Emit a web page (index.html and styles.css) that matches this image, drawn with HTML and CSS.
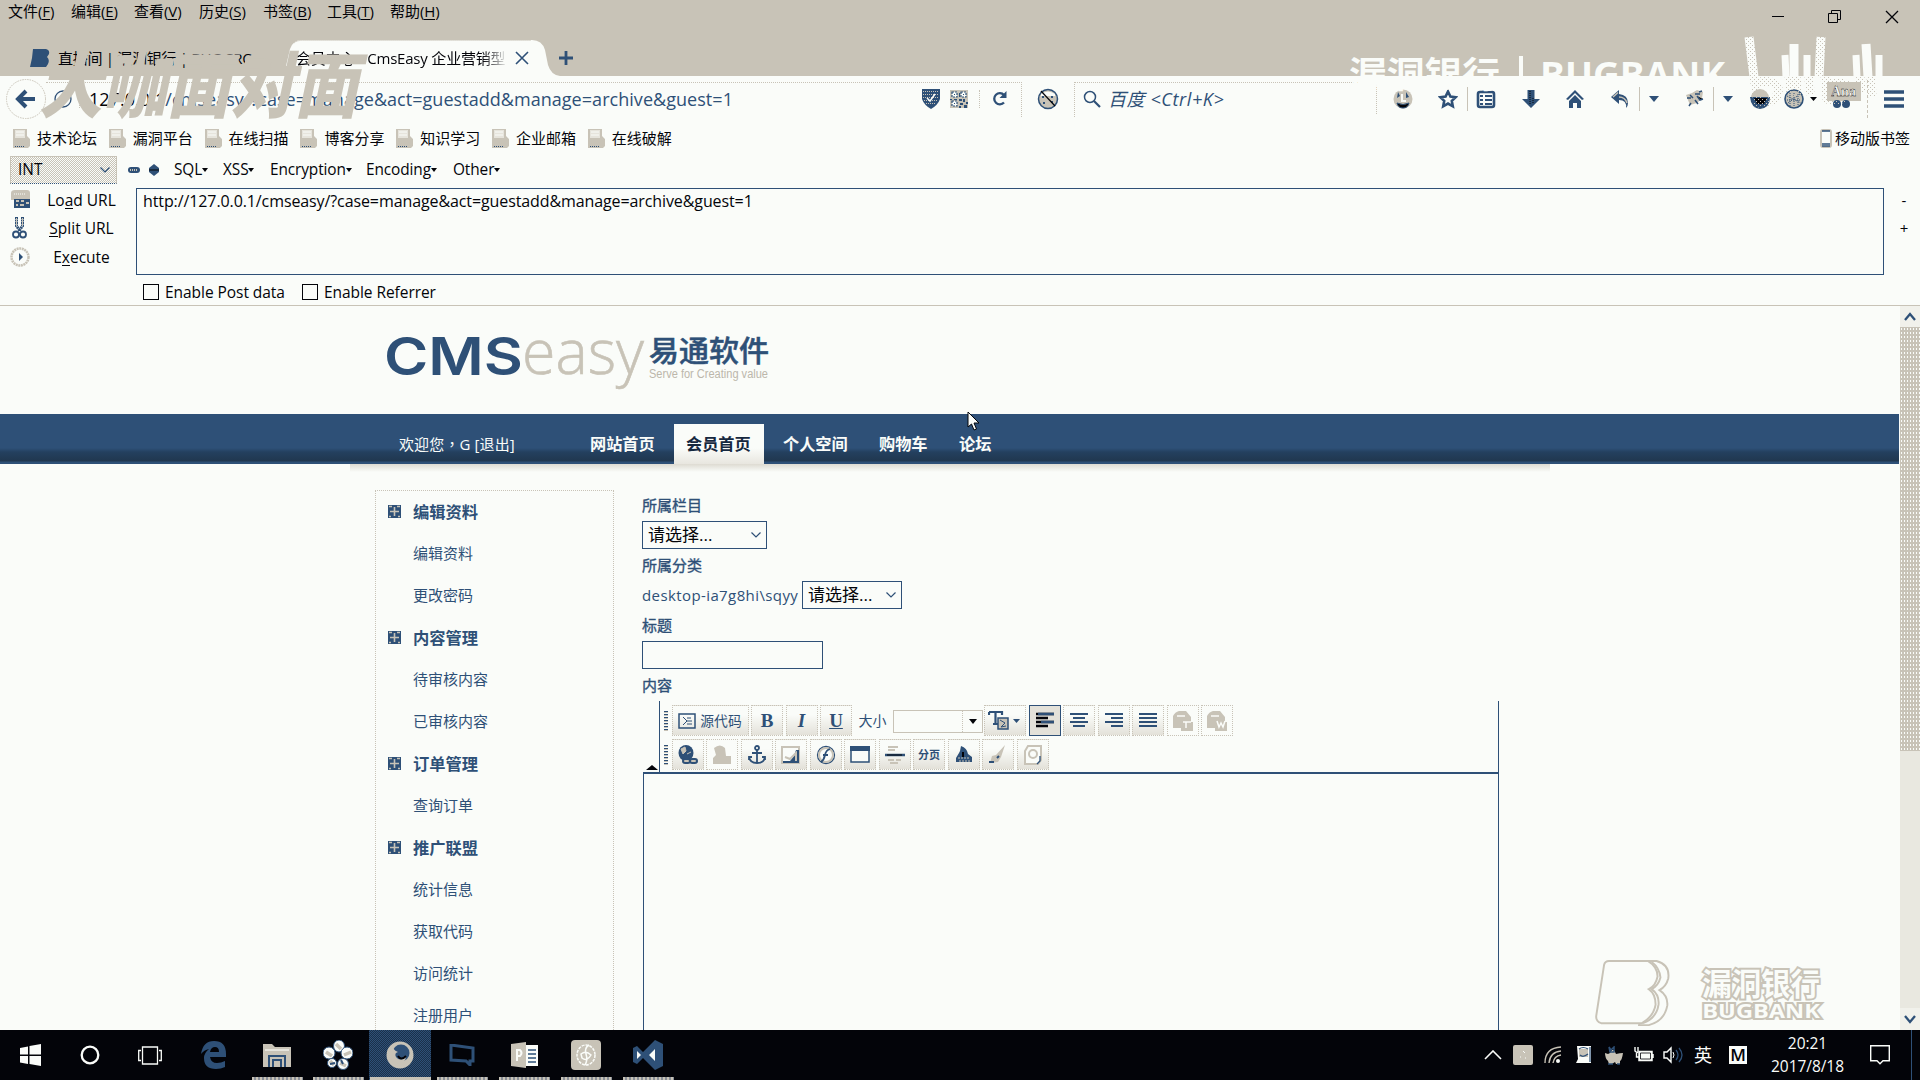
FILE: index.html
```html
<!DOCTYPE html>
<html lang="zh-CN">
<head>
<meta charset="utf-8">
<title>会员中心 - CmsEasy 企业营销型</title>
<link rel="stylesheet" href="styles.css">
</head>
<body>
<svg class="defs" width="0" height="0">
  <defs>
    <pattern id="dots" width="4" height="4" patternUnits="userSpaceOnUse"><path d="M0 0h1v1H0zM2 2h1v1H2z" fill="#c8c3b7"/></pattern>
    <symbol id="page" viewBox="0 0 18 20"><path d="M1 1h14v7l3 3v7l-2 2H1z" fill="#c8c3b7"/><path d="M3 2h10v8H3z" fill="#e6e4dc"/><path d="M4 4h8M4 7h8" stroke="#fafcf9"/><path d="M3 18.500h10" stroke="#2e5077" stroke-dasharray="1 1"/></symbol>
    <symbol id="plus" viewBox="0 0 13 13"><path d="M0 0h13v13H0z" fill="#2e5077"/><path d="M6.500 2v9M2 6.500h9M1 1.500h3M9 1.500h3M1 11.500h2M10 11.500h2" stroke="#c8c3b7" stroke-width="1.600"/></symbol>
    <symbol id="caret" viewBox="0 0 10 7"><path d="M0 0h10L5 6z" fill="#2e5077"/></symbol>
    <symbol id="chev" viewBox="0 0 10 6"><path d="M.5.500L5 5 9.500.500" fill="none" stroke="#2e5077" stroke-width="1.200"/></symbol>
  </defs>
</svg>

<header class="titlebar">
  <nav class="menu">
    <span>文件(<u>F</u>)</span><span>编辑(<u>E</u>)</span><span>查看(<u>V</u>)</span><span>历史(<u>S</u>)</span><span>书签(<u>B</u>)</span><span>工具(<u>T</u>)</span><span>帮助(<u>H</u>)</span>
  </nav>
  <div class="winbtns">
    <svg width="12" height="16"><path d="M0 6.500h12" stroke="#030409"/></svg>
    <svg width="13" height="13" fill="none" stroke="#030409"><path d="M.5 3.500h9v9h-9zM3.500 3.500v-3h9v9h-3"/></svg>
    <svg width="14" height="14" fill="none" stroke="#030409" stroke-width="1.300"><path d="M1 1l12 12M13 1L1 13"/></svg>
  </div>
  <div class="tabs">
    <div class="tab">
      <svg width="20" height="18"><path d="M3 0h13q4 1 3 5l-2 3q3 3 1 7l-2 3H0l2-9z" fill="#2e5077"/></svg>
      <span>直播间 | 漏洞银行 | BUG SRC</span>
    </div>
    <div class="tab active">
      <svg class="tabshape" width="286" height="36"><path d="M0 36q9-1 12-10l4-17q3-9 12-9h230q10 0 13 10l3 15q3 10 12 11z" fill="#fafcf9"/><path d="M20 3q4-3 9-2.500h228" fill="none" stroke="#c8c3b7" stroke-dasharray="1 1"/></svg>
      <span class="tabtitle">会员中心 - CmsEasy 企业营销型</span>
      <svg class="tabclose" width="14" height="14"><path d="M1 1l12 12M13 1L1 13" stroke="#2e5077" stroke-width="1.600"/></svg>
    </div>
    <svg class="newtab" width="16" height="16"><path d="M8 1v14M1 8h14" stroke="#2e5077" stroke-width="2.800"/></svg>
  </div>
</header>

<div class="toolbar">
  <svg class="back" width="40" height="40"><circle cx="20" cy="20" r="19.500" fill="none" stroke="#c8c3b7" stroke-dasharray="1.500 1"/><path d="M29 20H13M20 12l-8 8 8 8" fill="none" stroke="#2e5077" stroke-width="4"/></svg>
  <div class="urlbar">
    <svg width="18" height="18" class="info"><circle cx="9" cy="9" r="8" fill="none" stroke="#2e5077" stroke-width="1.300"/><path d="M9 7.500V13M9 4v2" stroke="#2e5077" stroke-width="2"/></svg>
    <span class="vsep"></span>
    <span class="url"><b>127.0.0.1</b>/cmseasy/?case=manage&amp;act=guestadd&amp;manage=archive&amp;guest=1</span>
    <div class="urlicons">
      <svg width="18" height="20"><path d="M0 0h18v10q-2 6-9 10Q2 16 0 10z" fill="#2e5077"/><path d="M1 2.500h16M1 5.500h16M1 8.500h16M2 11.500h14M4 14.500h10" stroke="#c8c3b7" stroke-dasharray="1 1"/><path d="M5 9l3 3 5-7" fill="none" stroke="#fafcf9" stroke-width="1.500"/></svg>
      <svg width="18" height="18"><path d="M0 0h18v18H0z" fill="#c8c3b7"/><path d="M2 2h5v5H2zM11 2h5v5h-5zM2 11h5v5H2z" fill="#fafcf9" stroke="#2e5077" stroke-width="1.200" stroke-dasharray="2 1"/><path d="M4 4h1v1H4zM13 4h1v1h-1zM4 13h1v1H4zM9 3h1v4H9zM9 9h3v2H9zM13 9h2v3h-2zM16 12h2v2h-2zM10 13h3v2h-3zM14 15h3v3h-3zM9 16h2v2H9zM0 9h2v1H0zM4 9h3v1H4z" fill="#2e5077"/></svg>
      <span class="vsep"></span>
      <svg width="16" height="16"><path d="M12 11.500A5.600 5.600 0 1 1 12 4" fill="none" stroke="#2e5077" stroke-width="2.300"/><path d="M14.500 0v7h-7z" fill="#2e5077"/></svg>
    </div>
  </div>
  <svg class="noscript" width="22" height="22"><circle cx="11" cy="11" r="9.500" fill="#c8c3b7" stroke="#2e5077" stroke-width="1.500"/><path d="M4 6q7-5 14 0v2H4z" fill="#fafcf9"/><path d="M5 9h2M14 9h2M6 15h2M14 14h2" stroke="#2e5077" stroke-width="2"/><path d="M4 3l14 15" stroke="#030409" stroke-width="1.200"/></svg>
  <div class="search">
    <svg width="18" height="18" fill="none" stroke="#2e5077"><circle cx="7" cy="7" r="5.500" stroke-width="1.500"/><path d="M11 11l6 6" stroke-width="2.200"/></svg>
    <span>百度 &lt;Ctrl+K&gt;</span>
  </div>
  <div class="tools">
    <svg width="20" height="20"><circle cx="10" cy="10" r="9.500" fill="#c8c3b7"/><path d="M5 3l2 4-3 2zM13 3l3 5-3 1z" fill="#2e5077"/><path d="M4 14q6 3 12 0-1 5-6 5t-6-5z" fill="#030409" stroke="#2e5077"/><path d="M9 5v7h4" fill="none" stroke="#fafcf9" stroke-width="2"/></svg>
    <svg width="20" height="20"><path d="M10 2.500l2.400 5 5.300.700-3.900 3.700 1 5.400-4.800-2.700-4.800 2.700 1-5.400-3.900-3.700 5.300-.700z" fill="none" stroke="#2e5077" stroke-width="2.600"/></svg>
    <i class="sep"></i>
    <svg width="20" height="20"><path d="M4 3q6-5 12 0" fill="#c8c3b7"/><rect x="2" y="3" width="16" height="15" rx="2" fill="#fafcf9" stroke="#2e5077" stroke-width="2.600"/><path d="M4 7h3M9 7h7M4 11h3M9 11h7M4 15h3M9 15h7" stroke="#2e5077" stroke-width="2"/></svg>
    <svg width="20" height="20"><path d="M6.500 1h7v9H19l-9 9-9-9h5.500z" fill="#2e5077"/><path d="M9 2v14M12 9v5" stroke="#030409" stroke-dasharray="1 1"/></svg>
    <svg width="20" height="20"><path d="M10 1l9 9-2 1-7-7-7 7-2-1zM10 6l6 6v7h-4v-5H8v5H4v-7z" fill="#2e5077"/></svg>
    <svg width="20" height="20"><path d="M1 8l8-7v4q9 1 9 9 0 3-2 5 1-8-7-8v4z" fill="#2e5077"/><path d="M3 8l5-4.500M9 8q6 0 8 6" fill="none" stroke="#c8c3b7" stroke-width="1.500"/></svg>
    <i class="sep"></i>
    <svg width="10" height="7"><use href="#caret"/></svg>
    <svg width="20" height="20"><path d="M1 6l6-2 5-3 6 2-1 6-5 5-7 2z" fill="#c8c3b7"/><path d="M5 6l3 3M10 5l5 0M2 9h4M12 7l3 4 3-1M6 14l-2 3M10 11l3 4M14 3l3-1" stroke="#2e5077" stroke-width="1.500"/></svg>
    <i class="sep"></i>
    <svg width="10" height="7"><use href="#caret"/></svg>
    <svg width="20" height="20"><circle cx="10" cy="9" r="9" fill="#c8c3b7"/><path d="M0 8h20q0 11-10 12Q1 19 0 8z" fill="#2e5077"/><path d="M4 9h13l-3 6H7z" fill="#030409"/></svg>
    <svg width="20" height="20"><circle cx="10" cy="10" r="9" fill="#c8c3b7" stroke="#2e5077" stroke-width="1.600"/><path d="M3 7l14 7M4 14L16 5M10 4v14M6 4v13M14 5v12M3 11h14" stroke="#2e5077" stroke-dasharray="1 1"/></svg>
    <svg width="7" height="5"><path d="M0 0h7L3.500 4z" fill="#030409"/></svg>
    <svg width="36" height="34" viewBox="0 0 36 34"><path d="M1 0h34v19H1z" fill="#c8c3b7"/><text x="5" y="14" class="ana">Ana</text><circle cx="11" cy="22" r="4" fill="#2e5077"/><circle cx="20" cy="22" r="4" fill="#2e5077"/></svg>
    <i class="sep dash"></i>
    <svg width="20" height="18"><path d="M0 2h20M0 9h20M0 16h20" stroke="#2e5077" stroke-width="3.400"/></svg>
  </div>
</div>

<div class="bookmarks">
  <span><svg width="18" height="20"><use href="#page"/></svg>技术论坛</span>
  <span><svg width="18" height="20"><use href="#page"/></svg>漏洞平台</span>
  <span><svg width="18" height="20"><use href="#page"/></svg>在线扫描</span>
  <span><svg width="18" height="20"><use href="#page"/></svg>博客分享</span>
  <span><svg width="18" height="20"><use href="#page"/></svg>知识学习</span>
  <span><svg width="18" height="20"><use href="#page"/></svg>企业邮箱</span>
  <span><svg width="18" height="20"><use href="#page"/></svg>在线破解</span>
  <span class="mobile"><svg width="12" height="19"><rect x="1" y="1" width="10" height="17" rx="2" fill="#fafcf9" stroke="#c8c3b7" stroke-width="2"/><path d="M2 2h8M2 15h8M2 17h8" stroke="#2e5077" stroke-width="1.500"/></svg>移动版书签</span>
</div>

<section class="hackbar">
  <div class="hb-menu">
    <div class="hb-select">INT<svg width="10" height="6"><use href="#chev"/></svg></div>
    <svg width="12" height="7"><rect width="12" height="6" rx="3" fill="#2e5077"/><path d="M2 3h8" stroke="#c8c3b7" stroke-width="2" stroke-dasharray="1 1"/></svg>
    <svg width="12" height="12"><path d="M6 0l5 4v4l-5 4-5-4V4z" fill="#2e5077"/><path d="M1 6h10" stroke="#030409"/></svg>
    <span>SQL</span><span>XSS</span><span>Encryption</span><span>Encoding</span><span>Other</span>
  </div>
  <div class="hb-main">
    <div class="hb-actions">
      <div><svg width="20" height="20"><path d="M1 3q0-3 4-3h12q3 0 3 3v7H1z" fill="#c8c3b7"/><path d="M4 4h12" stroke="#fafcf9" stroke-dasharray="1 1"/><path d="M4 9h16v9H4z" fill="#2e5077"/><path d="M6 11h3M11 11h3M6 15h2M10 15h4M16 13h3" stroke="#c8c3b7" stroke-width="2"/></svg><span>Lo<u>a</u>d URL</span></div>
      <div><svg width="20" height="22"><path d="M6.500 0v9l3 4M12.500 0v9l-3 4" fill="none" stroke="#2e5077" stroke-width="3" stroke-dasharray="2 .500"/><path d="M6.500 1v8M12.500 1v8" stroke="#c8c3b7"/><circle cx="6" cy="17.500" r="3" fill="none" stroke="#2e5077" stroke-width="1.800"/><circle cx="13" cy="17.500" r="3" fill="none" stroke="#2e5077" stroke-width="1.800"/></svg><span><u>S</u>plit URL</span></div>
      <div><svg width="20" height="20"><circle cx="10" cy="10" r="8.500" fill="#fafcf9" stroke="#c8c3b7" stroke-width="2.500" stroke-dasharray="2 .600"/><path d="M9 6l4 4-4 4z" fill="#2e5077"/></svg><span>E<u>x</u>ecute</span></div>
    </div>
    <div class="hb-text">http://127.0.0.1/cmseasy/?case=manage&amp;act=guestadd&amp;manage=archive&amp;guest=1</div>
    <div class="hb-side"><span>-</span><span>+</span></div>
  </div>
  <div class="hb-checks"><label><i></i>Enable Post data</label><label><i></i>Enable Referrer</label></div>
</section>

<div class="viewport">
  <main class="page">
    <div class="brand">
      <svg width="400" height="72" viewBox="0 0 400 72">
        <text class="cms" x="1" y="45" textLength="139" lengthAdjust="spacingAndGlyphs">CMS</text>
        <text class="easy" x="139" y="44" textLength="122" lengthAdjust="spacingAndGlyphs">easy</text>
        <text class="cn" x="266" y="32" textLength="120" lengthAdjust="spacingAndGlyphs">易通软件</text>
        <text class="slogan" x="266" y="48" textLength="119" lengthAdjust="spacingAndGlyphs">Serve for Creating value</text>
      </svg>
    </div>
    <div class="nav">
      <span class="welcome">欢迎您<span class="comma" lang="zh-TW">，</span>G [退出]</span>
      <a>网站首页</a><a class="on">会员首页</a><a>个人空间</a><a>购物车</a><a>论坛</a>
    </div>
    <div class="shadow"></div>
    <div class="cols">
      <aside class="side">
        <h3><svg width="13" height="13"><use href="#plus"/></svg>编辑资料</h3><p>编辑资料</p><p>更改密码</p>
        <h3><svg width="13" height="13"><use href="#plus"/></svg>内容管理</h3><p>待审核内容</p><p>已审核内容</p>
        <h3><svg width="13" height="13"><use href="#plus"/></svg>订单管理</h3><p>查询订单</p>
        <h3><svg width="13" height="13"><use href="#plus"/></svg>推广联盟</h3><p>统计信息</p><p>获取代码</p><p>访问统计</p><p>注册用户</p>
      </aside>
      <form class="form">
        <div class="row strong">所属栏目</div>
        <div class="row"><div class="select wide">请选择...<svg width="10" height="6"><use href="#chev"/></svg></div></div>
        <div class="row strong">所属分类</div>
        <div class="row"><span class="host">desktop-ia7g8hi\sqyy</span><div class="select">请选择...<svg width="10" height="6"><use href="#chev"/></svg></div></div>
        <div class="row strong">标题</div>
        <div class="row"><div class="input"></div></div>
        <div class="row strong">内容</div>
        <div class="editor">
          <div class="ed-top">
            <div class="collapse"><svg width="12" height="5"><path d="M0 5l6-5 6 5z" fill="#030409"/></svg></div>
            <div class="ed-bars">
              <div class="bar">
                <i class="grip"></i>
                <div class="btn src"><svg width="18" height="16"><path d="M1 1h16v14H1z" fill="none" stroke="#2e5077" stroke-width="1.500"/><path d="M5 4l4 4-4 4M9 8h5M9 5h4M9 11h5" fill="none" stroke="#2e5077"/></svg>源代码</div>
                <div class="btn serif">B</div><div class="btn serif it">I</div><div class="btn serif un">U</div>
                <span class="size">大小</span>
                <div class="combo"><i></i><svg width="8" height="5"><path d="M0 0h8L4 5z" fill="#030409"/></svg></div>
                <div class="btn tc"><svg width="34" height="22"><path d="M1 2h13v3M1 2v3M7.500 2v12M5 14h5" fill="none" stroke="#2e5077" stroke-width="2.200"/><path d="M10 8h10v11H10z" fill="#c8c3b7" stroke="#2e5077" stroke-width="1.500"/><path d="M12 10l5 3-4 4 5-1" fill="none" stroke="#2e5077"/><path d="M25 9h7l-3.500 4z" fill="#2e5077"/></svg></div>
                <div class="btn sel"><svg width="18" height="18"><path d="M0 2h18M0 6h12M0 10h18M0 14h12" stroke="#030409" stroke-width="2.500"/><path d="M2 2h16M5 10h13" stroke="#2e5077" stroke-width="2.500"/></svg></div>
                <div class="btn"><svg width="18" height="18"><path d="M0 2h18M3 6h12M0 10h18M3 14h12" stroke="#2e5077" stroke-width="2"/></svg></div>
                <div class="btn"><svg width="18" height="18"><path d="M0 2h18M6 6h12M0 10h18M6 14h12" stroke="#2e5077" stroke-width="2"/></svg></div>
                <div class="btn"><svg width="18" height="18"><path d="M0 2h18M0 6h18M0 10h18M0 14h18" stroke="#2e5077" stroke-width="2"/></svg></div>
                <div class="btn flat"><svg width="20" height="20"><path d="M0 5q2-4 6-5h7l5 6v5h2v9H8v-3H0z" fill="#c8c3b7"/><path d="M4 5h8M10 11h8M13 11v6" stroke="#fafcf9" stroke-width="1.500"/></svg></div>
                <div class="btn flat"><svg width="20" height="20"><path d="M0 5q2-4 6-5h7l5 6v5h2v9H8v-3H0z" fill="#c8c3b7"/><path d="M4 5h8M10 10l2 6 2-4 2 4 2-6" fill="none" stroke="#fafcf9" stroke-width="1.500"/></svg></div>
              </div>
              <div class="bar">
                <i class="grip"></i>
                <div class="btn"><svg width="20" height="20"><ellipse cx="8" cy="8" rx="7.500" ry="8" fill="#2e5077"/><path d="M3 4l4-2 1 4-3 3zM9 9l4-2" fill="#c8c3b7" stroke="#c8c3b7"/><rect x="5" y="14" width="7" height="4" rx="2" fill="#c8c3b7" stroke="#2e5077" stroke-width="2"/><rect x="12" y="14" width="7" height="4" rx="2" fill="#c8c3b7" stroke="#2e5077" stroke-width="2"/></svg></div>
                <div class="btn flat"><svg width="20" height="20"><path d="M2 3q6-5 11 0l1 8h5v8H1v-6l3-3z" fill="#c8c3b7"/></svg></div>
                <div class="btn"><svg width="18" height="20" fill="none" stroke="#2e5077" stroke-width="1.800"><circle cx="9" cy="3" r="2"/><path d="M9 5v14M4 8h10M1 12q1 6 8 6t8-6M1 15v-3h3M17 15v-3h-3"/></svg></div>
                <div class="btn"><svg width="20" height="18"><path d="M1 1h17v16H1z" fill="#fafcf9" stroke="#c8c3b7" stroke-width="2"/><path d="M2 15h7l4-5 2-6h3v13H2z" fill="#2e5077"/><path d="M4 11l5 2 6-6v8" stroke="#c8c3b7" stroke-width="2" fill="none"/></svg></div>
                <div class="btn"><svg width="20" height="20"><circle cx="10" cy="10" r="8.500" fill="#fafcf9" stroke="#2e5077" stroke-width="1.300"/><circle cx="10" cy="10" r="7" fill="none" stroke="#c8c3b7" stroke-width="2"/><path d="M14 4q-4 1-5 6t-4 7M7 10h5" stroke="#2e5077" stroke-width="1.800" fill="none"/></svg></div>
                <div class="btn"><svg width="20" height="17"><path d="M1 1h18v15H1z" fill="#fafcf9" stroke="#2e5077" stroke-width="1.500"/><path d="M0 0h20v5H0z" fill="#2e5077"/></svg></div>
                <div class="btn"><svg width="20" height="18"><path d="M3 1h10M3 4h7M3 14h6M11 14h5M5 17h8" stroke="#c8c3b7" stroke-width="2"/><path d="M0 9h20" stroke="#2e5077" stroke-width="2.500"/><path d="M2 9h15" stroke="#030409"/></svg></div>
                <div class="btn pb">分页</div>
                <div class="btn"><svg width="20" height="18"><path d="M7 0q6 2 7 8l4 3v5H2v-4l3-5 1-2z" fill="#2e5077"/><path d="M4 12h12M5 15h12" stroke="#c8c3b7" stroke-dasharray="2 1"/><path d="M9 6v5" stroke="#030409" stroke-width="2"/></svg></div>
                <div class="btn"><svg width="20" height="20"><path d="M17 0l-9 10-4 1-2 7 8-1 3-5z" fill="#c8c3b7"/><path d="M1 17h5M9 13l2-2" stroke="#2e5077" stroke-width="2"/></svg></div>
                <div class="btn"><svg width="20" height="20"><path d="M5 1h13v14l-3 4H2V6z" fill="#fafcf9" stroke="#c8c3b7" stroke-width="2"/><circle cx="10" cy="9" r="4" fill="none" stroke="#c8c3b7" stroke-width="2"/><path d="M17 11v5l-3 3" fill="none" stroke="#2e5077" stroke-width="1.300"/></svg></div>
              </div>
            </div>
          </div>
          <div class="ed-body"></div>
        </div>
      </form>
    </div>
  </main>
  <div class="scroll">
    <div class="sb"><svg width="12" height="9"><path d="M1 8l5-6 5 6" fill="none" stroke="#2e5077" stroke-width="2.300"/></svg></div>
    <div class="thumb"></div><div class="track"></div>
    <div class="sb"><svg width="12" height="9"><path d="M1 1l5 6 5-6" fill="none" stroke="#2e5077" stroke-width="2.300"/></svg></div>
  </div>
</div>

<footer class="taskbar">
  <div class="apps">
    <div><svg width="21" height="22"><path d="M0 4l8-1.500v8H0zM9.500 2L21 0v10.500H9.500zM0 12h8v8l-8-1.500zM9.500 12H21v10L9.500 20z" fill="#fafcf9"/></svg></div>
    <div><svg width="20" height="20"><circle cx="10" cy="10" r="8.300" fill="none" stroke="#fafcf9" stroke-width="2.300"/></svg></div>
    <div><svg width="24" height="19" fill="none" stroke="#fafcf9" stroke-width="1.300"><path d="M4.500 1h15v17h-15zM3 4.500H.7v10H3M21 4.500h2.300v10H21"/></svg></div>
    <div><svg width="26" height="28"><path d="M0 13Q2 0 13 0q12 0 12 13v3H9q1 6 7 6 4 0 8-2v6q-4 2-9 2Q3 28 3 17 3 12 8 8 3 9 0 13zM9 11h9q0-5-4-5t-5 5z" fill="#2e5077" fill-rule="evenodd"/></svg></div>
    <div class="run"><svg width="28" height="25"><path d="M0 1h9l3 3h16v20H0z" fill="#c8c3b7"/><path d="M2 6h24v2H2z" fill="#e6e4dc"/><path d="M6 24V13h16v11M10 24v-7h8v7" fill="none" stroke="#2e5077" stroke-width="2"/></svg></div>
    <div class="run"><svg width="30" height="30"><g fill="#fafcf9" stroke="#2e5077"><ellipse cx="16" cy="6" rx="5.500" ry="6"/><ellipse cx="6" cy="13" rx="6" ry="6"/><ellipse cx="24" cy="13" rx="6" ry="6"/><circle cx="9" cy="23" r="4.500"/><circle cx="20" cy="24" r="5.500"/></g><path d="M13 4l5 5M3 12l6 4M21 15l7-3M17 23l6 3M7 21l4 4" stroke="#c8c3b7" stroke-width="3.500"/><path d="M7 24l5-1M18 20l2 4" stroke="#2e5077" stroke-width="2"/></svg></div>
    <div class="run cur"><svg width="28" height="28"><circle cx="14" cy="14" r="13.500" fill="#c8c3b7"/><circle cx="15" cy="12" r="8.500" fill="#2e5077"/><path d="M7 3q-1 6 5 8-4 1-2 5 4 5 10 0-1 7-9 6Q1 19 3 7z" fill="#c8c3b7"/><path d="M12 15q3 5 8 0" fill="none" stroke="#030409" stroke-width="2"/></svg></div>
    <div class="run"><svg width="26" height="22"><path d="M2 1l22 3v13h-3v4l-4-4L2 16z" fill="none" stroke="#2e5077" stroke-width="3"/></svg></div>
    <div class="run"><svg width="27" height="26"><path d="M14 3h13v21H14z" fill="#fafcf9"/><path d="M17 8h8M17 12h8M17 16h8M17 20h8" stroke="#2e5077" stroke-width="1.500"/><path d="M0 2L15 0v26L0 24z" fill="#c8c3b7"/><path d="M6 19V8h3q3 3 0 6H6" fill="none" stroke="#fafcf9" stroke-width="2"/></svg></div>
    <div class="run"><svg width="30" height="30"><rect width="30" height="30" rx="4" fill="#c8c3b7"/><ellipse cx="15" cy="15" rx="9" ry="10" fill="none" stroke="#fafcf9" stroke-width="1.500" stroke-dasharray="3 1"/><path d="M18 5q-5 3-3 9t-1 11M10 14q5-4 10 1-4 7-9 3z" fill="none" stroke="#fafcf9" stroke-width="1.500"/></svg></div>
    <div class="run"><svg width="30" height="30"><path d="M22 0l8 4v22l-8 4L10 18l-6 6-4-2V8l4-2 6 6z" fill="#2e5077"/><path d="M4 11v8l4-4zM22 9v12l-6-6z" fill="#fafcf9"/></svg></div>
  </div>
  <div class="tray">
    <svg width="18" height="10"><path d="M1 9l8-8 8 8" fill="none" stroke="#fafcf9" stroke-width="1.600"/></svg>
    <svg width="20" height="20"><rect width="20" height="20" rx="2" fill="#c8c3b7"/><path d="M10 6l2 2M7 12h1M12 13h1" stroke="#fafcf9"/></svg>
    <svg width="18" height="18" fill="none" stroke="#c8c3b7" stroke-width="1.400"><path d="M1 17Q1 2 17 1M5 17Q6 6 17 5M9 17q1-7 8-8"/><circle cx="14" cy="15" r="2" fill="#fafcf9" stroke="none"/></svg>
    <svg width="15" height="18"><path d="M1 0h14v17H0l2-4z" fill="#fafcf9"/><path d="M3 3h9v8H3z" fill="#c8c3b7"/><path d="M3 3q4-3 9 0M4 9q3 3 8-1M14 1v15" fill="none" stroke="#2e5077" stroke-width="1.200"/></svg>
    <svg width="18" height="19"><path d="M5 7l2-3h2l2 4q4-1 7-1-1 7-3 8v3h-4l-1-2-3 2H4l-1-3q-3-3-3-8l3 1z" fill="#c8c3b7"/><path d="M4 1l2 3 3-3v5H5zM3 18h5M12 18h3" fill="none" stroke="#2e5077" stroke-width="1.500"/></svg>
    <svg width="20" height="16"><path d="M5 4.500h13v9H5zM19 7v4" fill="#fafcf9" stroke="#fafcf9" stroke-width="1.500"/><path d="M6.500 6h10v6h-10z" fill="#fafcf9" stroke="#030409" stroke-width=".800"/><path d="M1 0v4q3 3 3 0V0M2.500 6v4H5" fill="none" stroke="#fafcf9" stroke-width="1.400"/></svg>
    <svg width="20" height="18" fill="none"><path d="M1 6h3l4-4v14l-4-4H1z" stroke="#fafcf9" stroke-width="1.400"/><path d="M10 6q2 3 0 6" stroke="#fafcf9"/><path d="M13 4q4 5 0 10M16 2q6 7 0 14" stroke="#2e5077" stroke-width="1.300"/></svg>
    <span class="ime">英</span>
    <span class="m">M</span>
    <div class="clock"><span>20:21</span><span>2017/8/18</span></div>
    <svg width="20" height="20"><path d="M.7.700h18.600v15H13l-3 3-3-3H.7z" fill="none" stroke="#fafcf9" stroke-width="1.400"/></svg>
    <i class="peek"></i>
  </div>
</footer>

<div class="show-mark">大咖面对面</div>
<svg class="corner-mark" width="560" height="90" viewBox="0 0 560 90">
  <text class="bank" x="-1" y="53" textLength="151" lengthAdjust="spacingAndGlyphs">漏洞银行</text>
  <path d="M171 21v28" stroke="#fafcf9" stroke-width="4"/>
  <text class="bank" x="190" y="53" textLength="185" lengthAdjust="spacingAndGlyphs">BUGBANK</text>
  <g stroke-width="9" fill="none"><path d="M399 2l5 40M471 2l-2 40M444 9v33M516 9l2 33" stroke="#fafcf9"/><path d="M435 20l1 22M457 20v22M506 20l1 22M529 20v22" stroke="#fafcf9" stroke-width="7"/><path d="M399 2l5 40M471 2l-2 40M404 42l4 26q22 0 20-15-2-8-20-6M439 42l2 18M446 42l2 20M459 42l1 18M475 42l2 22q22 4 22-10-2-8-20-6M510 42l1 16M521 42l1 20" stroke="url(#dots)"/></g>
</svg>
<svg class="logo-mark" width="240" height="72" viewBox="0 0 240 72">
  <g fill="#fafcf9" stroke="#c8c3b7" stroke-width="2"><path d="M55 2h8q14 4 12 18-2 8-9 12 9 6 8 16-3 16-19 20H45z"/><path d="M14 2h40q10 6 10 16-2 10-9 13 7 5 7 16-2 12-14 19H6q-6-2-5-8L9 6q1-4 5-4z"/><path d="M58 3q8 6 9 16-2 8-9 12 8 6 7 16-2 14-16 19" fill="none"/></g>
  <text class="lm" x="110" y="37" textLength="121" lengthAdjust="spacingAndGlyphs" font-size="31">漏洞银行</text>
  <text class="lm" x="110" y="61" textLength="121" lengthAdjust="spacingAndGlyphs" font-size="21">BUGBANK</text>
</svg>
<svg class="cursor" width="13" height="20"><path d="M1 1v15l3.500-3 2.500 6 2.500-1-2.500-6H12z" fill="#fafcf9" stroke="#030409"/></svg>
</body>
</html>
```
FILE: styles.css
```css
:root { --bg: #fafcf9; --tan: #c8c3b7; --blue: #2e5077; --ink: #030409; }
* { box-sizing: border-box; }
body { margin: 0; width: 1920px; height: 1080px; overflow: hidden; position: relative; display: flex; flex-direction: column; background: var(--bg); color: var(--ink); font: 15px/20px "Open Sans", "Noto Sans CJK SC", sans-serif; }
svg { display: block; flex: none; }
.defs { position: absolute; }
u { text-decoration: none; border-bottom: 1px solid currentColor; display: inline-block; line-height: 15px; }

.titlebar { height: 76px; background: var(--tan); display: grid; grid-template: 40px 36px / 1fr 160px; flex: none; }
.menu { display: grid; grid-template-columns: 63px 63px 65px 64px 64px 63px 63px; padding-left: 8px; padding-top: 1px; white-space: nowrap; letter-spacing: -.05px; }
.winbtns { display: flex; align-items: flex-start; gap: 44px; padding: 10px 0 0 12px; }
.tabs { grid-column: 1 / -1; display: flex; align-items: flex-start; }
.tab { display: flex; gap: 8px; padding: 9px 0 0 30px; width: 274px; height: 36px; white-space: nowrap; }
.tab span { line-height: 18px; letter-spacing: -.3px; }
.tab.active { width: 286px; padding: 0; position: relative; }
.tabshape { position: absolute; left: 0; top: 0; }
.tabtitle { position: relative; width: 212px; margin: 9px 0 0 22px; -webkit-mask: linear-gradient(90deg, #000 88%, transparent); mask: linear-gradient(90deg, #000 88%, transparent); }
.tab.active .tabtitle { letter-spacing: -.2px; }
.tabclose { position: relative; margin: 11px 0 0 -1px; }
.newtab { margin: 10px 0 0 -2px; }

.toolbar { height: 47px; flex: none; display: flex; align-items: flex-start; padding: 3px 0 0 6px; }
.urlbar { width: 976px; height: 35px; margin-top: 3px; display: flex; align-items: center; border-top: 1px dotted var(--tan); border-right: 1px dotted var(--tan); padding: 0 0 2px 7px; }
.info { margin-left: 1px; }
.vsep { width: 0; height: 18px; border-left: 1px dotted var(--tan); margin-left: 7px; }
.url { width: 660px; margin-left: 9px; font-size: 18px; letter-spacing: .04px; color: var(--blue); white-space: nowrap; }
.url b { font-weight: 400; color: var(--ink); }
.urlicons { margin-left: auto; display: flex; align-items: center; gap: 10px; padding-right: 13px; }
.urlicons .vsep { margin-left: 1px; }
.urlicons .vsep + svg { margin-left: 2px; }
.noscript { margin: 9px 0 0 15px; }
.search { width: 284px; height: 35px; margin: 3px 0 0 15px; border-top: 1px dotted var(--tan); border-left: 1px dotted var(--tan); display: flex; align-items: center; gap: 7px; padding: 0 0 2px 8px; color: var(--blue); font-size: 18px; font-style: italic; letter-spacing: .6px; white-space: nowrap; }
.tools { margin: 5px 0 0 18px; height: 30px; border-left: 1px dotted var(--tan); display: grid; align-items: center; justify-items: end; grid-template-rows: 30px; grid-template-columns: 36px 45px 10px 28px 45px 44px 45px 10px 19px 46px 9px 19px 37px 34px 13px 45px 6px 36px; }
.sep { width: 1px; height: 24px; background: var(--tan); }
.sep.dash { background: none; border-left: 1px dashed var(--tan); height: 38px; }
.ana { font: bold 14px "Liberation Serif", serif; fill: var(--bg); stroke: var(--ink); stroke-width: .3; }

.bookmarks { height: 30px; flex: none; display: flex; align-items: center; padding: 0 10px 0 12px; white-space: nowrap; }
.bookmarks span { width: 95.800px; display: flex; align-items: center; gap: 7px; }
.bookmarks .mobile { width: auto; margin-left: auto; gap: 3px; }

.hackbar { height: 153px; flex: none; border-bottom: 1px solid var(--tan); }
.hb-menu { height: 32px; display: grid; align-items: center; grid-template-columns: 118px 20px 26px 49px 47px 96px 87px 60px; padding: 2px 0 0 10px; white-space: nowrap; font-size: 15.400px; }
.hb-menu span { letter-spacing: -.1px; }
.hb-menu span::after { content: ""; display: inline-block; border: 3px solid transparent; border-top: 4px solid var(--ink); border-bottom: 0; vertical-align: 3px; }
.hb-select { width: 107px; height: 28px; padding: 0 6px 0 7px; display: flex; align-items: center; justify-content: space-between; border: 1px solid var(--tan); border-bottom: 1px dotted var(--blue); background: repeating-conic-gradient(var(--tan) 0 25%, var(--bg) 0 50%) 0 0 / 2px 2px; }
.hb-main { display: grid; grid-template-columns: 136px 1748px 36px; height: 87px; margin-top: 3px; }
.hb-actions { display: grid; grid-template-rows: 23px 34px 24px; font-size: 15.500px; white-space: nowrap; }
.hb-actions div { display: grid; grid-template-columns: 20px 1fr; padding: 0 14px 0 10px; align-items: center; text-align: center; }
.hb-actions span { padding-left: 11px; }
.hb-text { border: 1px solid var(--blue); padding: 2px 6px; font-size: 16px; letter-spacing: -.1px; }
.hb-side { display: grid; grid-template-rows: 23px 34px; align-items: center; justify-items: center; padding-left: 4px; }
.hb-checks { display: flex; gap: 17px; padding: 7px 0 0 143px; font-size: 15.500px; }
.hb-checks label { display: flex; align-items: center; gap: 6px; letter-spacing: -.05px; }
.hb-checks i { width: 16px; height: 16px; border: 1px solid var(--ink); }

.viewport { height: 724px; flex: none; display: flex; overflow: hidden; }
.page { width: 1899px; height: 724px; overflow: hidden; color: var(--blue); }
.brand { height: 108px; padding: 24px 0 0 383px; }
.cms { font: 600 52px Inter, sans-serif; fill: var(--blue); }
.easy { font: 300 62px "Open Sans", sans-serif; fill: var(--tan); stroke: var(--tan); stroke-width: .6; }
.cn { font: 500 29px "Noto Sans CJK SC", sans-serif; fill: var(--blue); stroke: var(--blue); stroke-width: .5; }
.slogan { font: 12.500px "Liberation Sans", sans-serif; fill: #bcb7ab; }
.nav { height: 50px; display: flex; background: linear-gradient(transparent 34px, #24405f 38px, #20374f 47px, var(--blue) 48px), var(--blue); color: var(--bg); padding-left: 399px; white-space: nowrap; }
.welcome { width: 175px; padding-top: 20px; letter-spacing: .12px; }
.comma { font-family: "Noto Sans CJK TC", sans-serif; }
.nav a { font-size: 16.200px; font-weight: 700; padding-top: 20px; margin-left: 32px; width: 64px; }
.nav a:nth-child(2) { margin-left: 16px; }
.nav a.on { width: 90px; height: 40px; margin: 10px 0 0 20px; padding: 10px 0 0 12px; color: #16283f; background: linear-gradient(var(--bg) 60%, #e8e6df); }
.nav a.on + a { margin-left: 19px; }
.nav a:nth-child(5) { width: 48px; }
.shadow { height: 8px; width: 1200px; margin-left: 350px; background: linear-gradient(#dedbd2, var(--bg)); }
.cols { display: flex; padding: 18px 0 0 375px; }
.side { width: 239px; height: 542px; border: 1px dotted var(--tan); border-bottom: 0; padding: 0 0 0 12px; }
.side h3 { margin: 0; display: flex; align-items: center; gap: 12px; font-size: 16.300px; height: 42px; padding-bottom: 1px; }
.side p { margin: 0; height: 42px; padding-left: 25px; line-height: 40px; }
.form { width: 857px; margin-left: 28px; }
.row { height: 30px; display: flex; align-items: center; }
.strong { font-weight: 400; -webkit-text-stroke: .35px var(--blue); }
.host { width: 160px; letter-spacing: .4px; white-space: nowrap; }
.select { width: 100px; height: 28px; border: 1px solid var(--blue); color: var(--ink); font-size: 17px; display: flex; align-items: center; justify-content: space-between; padding: 0 5px; white-space: nowrap; }
.select.wide { width: 125px; }
.input { width: 181px; height: 28px; border: 1px solid var(--blue); }
.editor { width: 857px; margin-top: 1px; border-right: 1px solid var(--blue); }
.ed-top { display: flex; height: 71px; }
.collapse { width: 17px; display: flex; align-items: flex-end; padding: 0 0 2px 4px; }
.ed-bars { flex: 1; border-left: 1px solid var(--blue); padding: 4px 0 0 4px; display: grid; grid-template-rows: 31px 31px; row-gap: 3px; font-size: 14px; align-content: start; }
.bar { display: flex; gap: 2.500px; }
.grip { width: 4px; height: 20px; margin: 6px 1px 0 0; background: repeating-linear-gradient(var(--blue) 0 1px, var(--tan) 1px 2px, var(--bg) 2px 3px); }
.btn { width: 32px; height: 31px; display: flex; align-items: center; justify-content: center; border: 1px dotted var(--tan); background: linear-gradient(var(--bg) 30%, #e3e1d9); }
.btn.flat { background: none; }
.btn.src { width: 77px; gap: 4px; font-size: 13.800px; white-space: nowrap; }
.serif { font: bold 19px "Liberation Serif", serif; }
.it { font-style: italic; }
.un { text-decoration: underline; }
.size { width: 32px; margin-left: 4px; line-height: 32px; white-space: nowrap; }
.combo { width: 90px; height: 23px; margin-top: 5px; border: 1px solid var(--tan); display: flex; align-items: center; justify-content: flex-end; gap: 6px; padding-right: 5px; }
.combo i { width: 1px; height: 21px; border-left: 1px dotted var(--tan); }
.btn.tc { width: 42px; margin-left: -1.500px; }
.btn.sel { border: 1px solid var(--blue); background: #e3e1d9; }
.pb { font-size: 11px; font-weight: 700; }
.ed-body { height: 270px; margin-left: 1px; border-top: 2px solid var(--blue); border-left: 1px solid var(--blue); }

.scroll { width: 21px; padding-left: 1px; display: grid; grid-template-rows: 21px 424px 1fr 22px; }
.sb { display: grid; place-items: center; background: #f1f1eb; }
.thumb { background: radial-gradient(var(--bg) .6px, transparent .9px) 0 0 / 3px 4px, var(--tan); }
.track { background: #e9e8e0; }

.taskbar { height: 50px; flex: none; background: var(--ink); color: var(--bg); display: flex; justify-content: space-between; }
.apps { display: grid; grid-template-columns: 60px 60px 60px 67px 60px 62px 62px 62px 62px 62px 62px; }
.apps div { display: grid; place-items: center; height: 50px; }
.run { background: repeating-linear-gradient(90deg, var(--tan) 0 2px, #8a8f98 2px 4px) center bottom / 51px 3px no-repeat; }
.apps .cur { background: linear-gradient(var(--tan), var(--tan)) center bottom / 61px 3px no-repeat, repeating-conic-gradient(var(--blue) 0 25%, #1b3049 0 50%) 0 0 / 2px 2px; }
.tray { display: grid; align-items: center; justify-items: center; grid-template-columns: 30px 30px 30px 30px 32px 28px 30px 30px 40px 99px 46px 17px; width: 442px; }
.ime { font-size: 18px; }
.m { width: 18px; height: 18px; background: var(--bg); color: var(--ink); font: 600 17px/18px "Open Sans", sans-serif; text-align: center; }
.clock { display: grid; grid-template-rows: 23px 23px; text-align: center; line-height: 23px; font-size: 15.500px; }
.clock span { letter-spacing: -.05px; }
.peek { width: 1px; height: 50px; background: var(--blue); }

/* broadcast overlays */
.show-mark { position: absolute; left: 45px; top: 37px; font: 900 64px/88px "Noto Sans CJK SC", sans-serif; color: var(--tan); transform: skewX(-12deg) scaleY(1.12); white-space: nowrap; }
.corner-mark { position: absolute; left: 1350px; top: 35px; pointer-events: none; }
.bank { font: 700 36px "Open Sans", "Noto Sans CJK SC", sans-serif; fill: var(--bg); }
.logo-mark { position: absolute; left: 1592px; top: 959px; height: 70px; }
.lm { font-family: "Open Sans", "Noto Sans CJK SC", sans-serif; font-weight: 700; fill: var(--bg); stroke: var(--tan); stroke-width: 4; paint-order: stroke; }
.cursor { position: absolute; left: 967px; top: 411px; }
```
